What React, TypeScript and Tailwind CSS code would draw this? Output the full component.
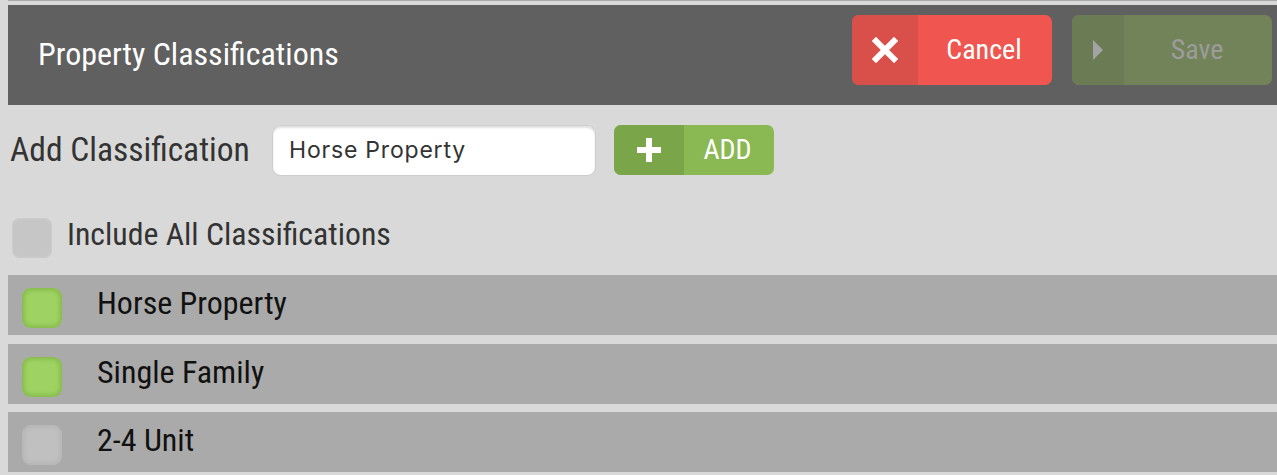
const condensed = { fontFamily: 'Roboto, "Noto Sans", sans-serif', fontStretch: '85%' };

type Classification = { id: string; label: string; checked: boolean };

const items: Classification[] = [
  { id: 'horse', label: 'Horse Property', checked: true },
  { id: 'single', label: 'Single Family', checked: true },
  { id: 'unit', label: '2-4 Unit', checked: false },
];

function Box({ checked }: { checked: boolean }) {
  return checked ? (
    <span className="mt-[6px] block h-[40px] w-[40px] shrink-0 rounded-[9px] bg-[#9ed363] shadow-[inset_0_0_5px_2px_#83b84a]" />
  ) : (
    <span className="mt-[6px] block h-[40px] w-[40px] shrink-0 rounded-[9px] bg-[#c0c0c0] shadow-[inset_0_0_5px_2px_#b4b4b4]" />
  );
}

export default function App() {
  return (
    <div className="h-[475px] w-full overflow-hidden bg-[#d9d9d9] pl-[8px]" style={condensed}>
      <div className="h-px bg-[#a9a9a9]" />

      <div className="mt-[4px] flex h-[100px] items-center justify-between bg-[#606060] pl-[30px] pr-[5px]">
        <h1 className="-mt-[2px] text-[32px] leading-none text-white">Property Classifications</h1>
        <div className="flex gap-[20px] self-start pt-[10px]">
          <button className="flex h-[70px] w-[200px] overflow-hidden rounded-[7px] bg-[#f0564f] text-white">
            <span className="flex h-full w-[66px] items-center justify-center bg-[#d9504b]">
              <svg width="26" height="26" viewBox="0 0 26 26" className="blur-[0.4px]">
                <path d="M4 4 L22 22 M22 4 L4 22" stroke="#fff" strokeWidth="6" strokeLinecap="square" />
              </svg>
            </span>
            <span className="flex flex-1 items-center justify-center pr-[2px] text-[28px]">Cancel</span>
          </button>
          <button className="flex h-[70px] w-[200px] overflow-hidden rounded-[7px] bg-[#728359] text-[#9c9c9c]">
            <span className="flex h-full w-[52px] items-center justify-center bg-[#6b7b53]">
              <svg width="12" height="22" viewBox="0 0 12 22">
                <path d="M1 1 L11 11 L1 21 Z" fill="#a3a3a3" />
              </svg>
            </span>
            <span className="flex flex-1 items-center justify-center pr-[2px] text-[28px]">Save</span>
          </button>
        </div>
      </div>

      <div className="mt-[20px] flex h-[50px] items-center pl-[2px]">
        <span className="w-[262px] text-[33.5px] text-[#333333]">Add Classification</span>
        <div
          className="flex h-[51px] w-[324px] items-center rounded-[9px] border border-[#cdcdcd] bg-white pl-[16px] text-[23px] tracking-[0.8px] text-[#333333] shadow-[inset_0_2px_2px_rgba(0,0,0,0.12)]"
          style={{ fontFamily: 'Inter, "Noto Sans", sans-serif', fontStretch: '100%' }}
        >
          Horse Property
        </div>
        <button className="ml-[18px] flex h-[50px] w-[160px] overflow-hidden rounded-[7px] bg-[#8ab853] text-white">
          <span className="flex h-full w-[70px] items-center justify-center bg-[#7aa548]">
            <svg width="28" height="28" viewBox="0 0 28 28" className="blur-[0.4px]">
              <path d="M14 2 V26 M2 14 H26" stroke="#fff" strokeWidth="6" />
            </svg>
          </span>
          <span className="flex flex-1 items-center justify-center pr-[3px] text-[28px]">ADD</span>
        </button>
      </div>

      <div className="mt-[43px] flex h-[40px] items-center pl-[4px]">
        <span className="block h-[40px] w-[40px] rounded-[8px] bg-[#c6c6c6] shadow-[inset_0_0_2px_1px_#cdcdcd]" />
        <span className="ml-[15px] -mt-[6px] text-[31.8px] text-[#333333]">Include All Classifications</span>
      </div>

      <div className="mt-[17px] flex flex-col gap-[8.5px]">
        {items.map((item) => (
          <div key={item.id} className="flex h-[60px] items-center bg-[#aaaaaa] pl-[14px]">
            <Box checked={item.checked} />
            <span className="ml-[35px] -mt-[4px] text-[32px] text-[#111111]">{item.label}</span>
          </div>
        ))}
      </div>
    </div>
  );
}
